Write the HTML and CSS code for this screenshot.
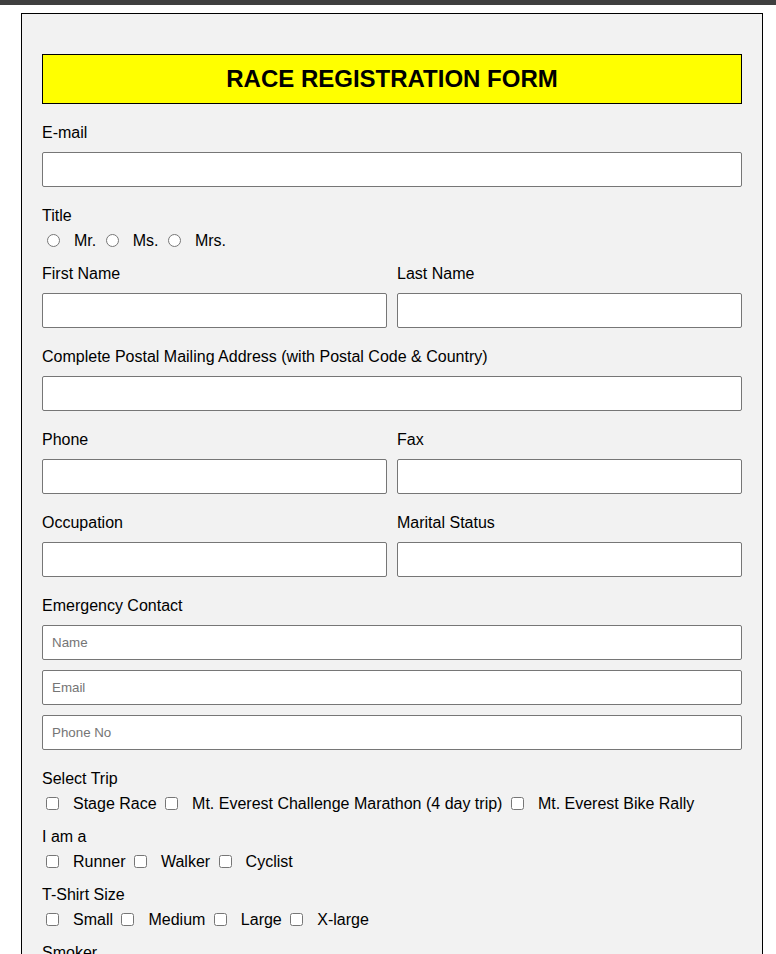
FILE: index.html
```html
<!DOCTYPE html>
<html lang="en">
<head>
<meta charset="utf-8">
<title>Race Registration Form</title>
<link rel="stylesheet" href="styles.css">
</head>
<body>
<div class="topbar"></div>
<form class="container">
  <h1 class="banner">RACE REGISTRATION FORM</h1>

  <div class="field">
    <label class="lbl">E-mail</label>
    <input class="txt" type="text">
  </div>

  <div class="field choice">
    <span class="lbl">Title</span>
    <div class="opts"><input type="radio" name="title"><label>Mr.</label> <input type="radio" name="title"><label>Ms.</label> <input type="radio" name="title"><label>Mrs.</label></div>
  </div>

  <div class="pair">
    <div class="field">
      <label class="lbl">First Name</label>
      <input class="txt" type="text">
    </div>
    <div class="field">
      <label class="lbl">Last Name</label>
      <input class="txt" type="text">
    </div>
  </div>

  <div class="field">
    <label class="lbl">Complete Postal Mailing Address (with Postal Code &amp; Country)</label>
    <input class="txt" type="text">
  </div>

  <div class="pair">
    <div class="field">
      <label class="lbl">Phone</label>
      <input class="txt" type="text">
    </div>
    <div class="field">
      <label class="lbl">Fax</label>
      <input class="txt" type="text">
    </div>
  </div>

  <div class="pair">
    <div class="field">
      <label class="lbl">Occupation</label>
      <input class="txt" type="text">
    </div>
    <div class="field">
      <label class="lbl">Marital Status</label>
      <input class="txt" type="text">
    </div>
  </div>

  <div class="field">
    <label class="lbl">Emergency Contact</label>
    <div class="stack">
      <input class="txt" type="text" placeholder="Name">
      <input class="txt" type="text" placeholder="Email">
      <input class="txt" type="text" placeholder="Phone No">
    </div>
  </div>

  <div class="field choice">
    <span class="lbl">Select Trip</span>
    <div class="opts"><input type="checkbox"><label>Stage Race</label> <input type="checkbox"><label>Mt. Everest Challenge Marathon (4 day trip)</label> <input type="checkbox"><label>Mt. Everest Bike Rally</label></div>
  </div>

  <div class="field choice">
    <span class="lbl">I am a</span>
    <div class="opts"><input type="checkbox"><label>Runner</label> <input type="checkbox"><label>Walker</label> <input type="checkbox"><label>Cyclist</label></div>
  </div>

  <div class="field choice">
    <span class="lbl">T-Shirt Size</span>
    <div class="opts"><input type="checkbox"><label>Small</label> <input type="checkbox"><label>Medium</label> <input type="checkbox"><label>Large</label> <input type="checkbox"><label>X-large</label></div>
  </div>

  <div class="field choice">
    <span class="lbl">Smoker</span>
    <div class="opts"><input type="radio" name="smoker"><label>Yes</label> <input type="radio" name="smoker"><label>No</label></div>
  </div>
</form>
</body>
</html>
```

FILE: styles.css
```css
html, body {
  margin: 0;
  padding: 0;
  background: #ffffff;
}

body {
  font-family: "Liberation Sans", Arial, sans-serif;
  font-size: 16px;
  color: #000;
}

.topbar {
  height: 5px;
  background: #3f3f3f;
}

.container {
  display: block;
  box-sizing: border-box;
  width: 742px;
  margin: 8px 0 0 21px;
  padding: 20px 20px 20px 20px;
  background: #f2f2f2;
  border: 1px solid #000;
}

.banner {
  margin: 20px 0 20px 0;
  padding: 10px 0;
  background: #ffff00;
  border: 1px solid #000;
  text-align: center;
  font-size: 24px;
  font-weight: bold;
  line-height: normal;
}

.field {
  margin-bottom: 20px;
}

.lbl {
  display: block;
  margin-bottom: 10px;
  line-height: normal;
}

.txt {
  display: block;
  box-sizing: border-box;
  width: 100%;
  height: 35px;
  margin: 0;
  padding: 0 9px;
  border: 1px solid #767676;
  border-radius: 2px;
  background: #fff;
  font-family: "Liberation Sans", Arial, sans-serif;
  font-size: 13.333px;
  color: #000;
}

.txt::placeholder {
  color: #757575;
}

.pair {
  display: grid;
  grid-template-columns: 1fr 1fr;
  column-gap: 10px;
}

.stack {
  display: flex;
  flex-direction: column;
  gap: 10px;
}

.choice {
  margin-bottom: 14px;
}

.choice .lbl {
  margin-bottom: 6px;
}

.opts {
  line-height: 20px;
  height: 20px;
}

.opts label {
  margin-left: 11px;
}

.opts input {
  vertical-align: -1px;
}
```
